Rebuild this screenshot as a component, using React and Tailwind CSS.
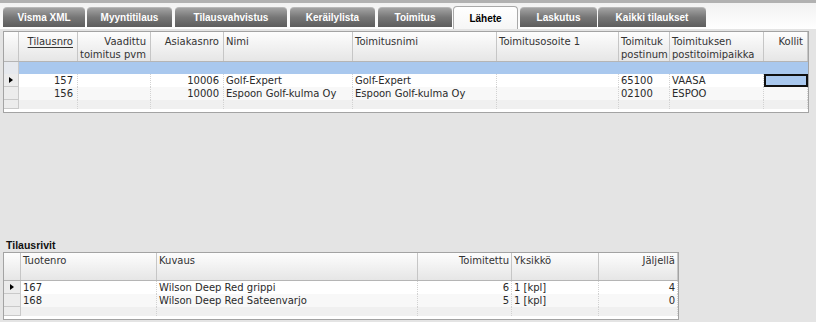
import React from 'react';

const tabs = [
  { label: 'Visma XML', cls: 'ml-[3px] w-[82px]' },
  { label: 'Myyntitilaus', cls: 'ml-[2px] w-[85px]' },
  { label: 'Tilausvahvistus', cls: 'ml-[3px] w-[112px]' },
  { label: 'Keräilylista', cls: 'ml-[3px] w-[85px]' },
  { label: 'Toimitus', cls: 'ml-[3px] w-[74px]' },
  { label: 'Lähete', cls: 'ml-[1px] w-[65px]', active: true },
  { label: 'Laskutus', cls: 'ml-[2px] w-[77px]' },
  { label: 'Kaikki tilaukset', cls: 'ml-[1px] w-[108px]' },
];

// header lines are what fits in the column (the grid clips the rest)
const orderCols = [
  { lines: ['Tilausnro'], w: 'w-[59px]', right: true, underline: true },
  { lines: ['Vaadittu', 'toimitus pvm'], w: 'w-[73px]', right: true },
  { lines: ['Asiakasnro'], w: 'w-[73px]', right: true },
  { lines: ['Nimi'], w: 'w-[129px]' },
  { lines: ['Toimitusnimi'], w: 'w-[144px]' },
  { lines: ['Toimitusosoite 1'], w: 'w-[122px]' },
  { lines: ['Toimituk', 'postinum'], w: 'w-[51px]', pad: 'pl-[2px] pr-0' },
  { lines: ['Toimituksen', 'postitoimipaikka'], w: 'w-[94px]' },
  { lines: ['Kollit'], w: 'w-[44px]', right: true },
];

const orders = [
  ['157', '', '10006', 'Golf-Expert', 'Golf-Expert', '', '65100', 'VAASA', ''],
  ['156', '', '10000', 'Espoon Golf-kulma Oy', 'Espoon Golf-kulma Oy', '', '02100', 'ESPOO', ''],
];

const lineCols = [
  { lines: ['Tuotenro'], w: 'w-[136px]' },
  { lines: ['Kuvaus'], w: 'w-[261px]' },
  { lines: ['Toimitettu'], w: 'w-[94px]', right: true },
  { lines: ['Yksikkö'], w: 'w-[87px]' },
  { lines: ['Jäljellä'], w: 'w-[79px]', right: true },
];

const lines = [
  ['167', 'Wilson Deep Red grippi', '6', '1 [kpl]', '4'],
  ['168', 'Wilson Deep Red Sateenvarjo', '5', '1 [kpl]', '0'],
];

const Tab = ({ tab }) =>
  tab.active ? (
    <div
      className={`${tab.cls} h-[23px] rounded-t-[4px] border-x border-t border-[#a9a9a9] bg-linear-to-b from-white to-[#f6f6f6] flex items-center justify-center text-black font-bold`}
    >
      {tab.label}
    </div>
  ) : (
    <div
      className={`${tab.cls} h-[20px] mb-[2px] rounded-t-[4px] border-t border-[#b8b8b8] bg-linear-to-b from-[#a3a3a3] via-[#767676] to-[#5d5d5d] flex items-center justify-center text-white font-bold`}
    >
      {tab.label}
    </div>
  );

const RowHeader = ({ h, bg = 'bg-[#ececec]', arrow, w }) => (
  <div className={`${w} ${h} ${bg} shrink-0 border-r border-b border-[#c9c9c9] flex items-center justify-center`}>
    {arrow && <div className="w-0 h-0 border-y-[3px] border-y-transparent border-l-[4px] border-l-black" />}
  </div>
);

const Grid = ({ cols, rows, width, rhW, headH, headPad, cellPad, selectedLast, blueRow }) => (
  <div className={`${width} bg-white border border-[#a3a3a3] flex flex-col overflow-hidden`}>
    {/* header */}
    <div className={`flex ${headH} border-b border-[#b5b5b5] bg-linear-to-b from-[#fdfdfd] to-[#e6e6e6]`}>
      <div className={`${rhW} shrink-0 border-r border-[#c6c6c6]`} />
      {cols.map((c, i) => (
        <div
          key={i}
          className={`${c.w} shrink-0 border-r border-[#c6c6c6] ${headPad} ${c.pad || cellPad} ${c.right ? 'text-right' : 'text-left'} text-[#333] leading-[13px] overflow-hidden`}
        >
          {c.lines.map((l, j) => (
            <div key={j} className={`whitespace-nowrap ${c.underline ? 'underline underline-offset-2' : ''}`}>
              {l}
            </div>
          ))}
        </div>
      ))}
    </div>

    {blueRow && (
      <div className="flex h-[12px]">
        <div className={`${rhW} shrink-0 bg-[#e6e9ee] border-r border-[#c9c9c9]`} />
        <div className="flex-1 bg-[#a9c8ee]" />
      </div>
    )}

    {rows.map((r, ri) => (
      <div key={ri} className={`flex h-[13px] ${ri % 2 ? 'bg-[#f8f8f8]' : 'bg-white'}`}>
        <RowHeader w={rhW} h="h-[13px]" arrow={ri === 0} />
        {cols.map((c, ci) => {
          const sel = selectedLast && ri === 0 && ci === cols.length - 1;
          return (
            <div
              key={ci}
              className={`${c.w} shrink-0 ${cellPad} leading-[13px] whitespace-nowrap overflow-hidden text-[#2a2a2a] ${c.right ? 'text-right' : 'text-left'} ${
                sel ? 'bg-[#a9c8ee] border-2 border-[#111]' : 'border-r border-dotted border-[#d2d2d2]'
              }`}
            >
              {r[ci]}
            </div>
          );
        })}
      </div>
    ))}

    <div className="flex h-[9px] bg-[#f0f0f0]">
      <RowHeader w={rhW} h="h-[9px]" />
      {cols.map((c, ci) => (
        <div key={ci} className={`${c.w} shrink-0 border-r border-dotted border-[#d2d2d2]`} />
      ))}
    </div>
    <div className="flex-1 bg-white" />
  </div>
);

export default function App() {
  return (
    <div className="w-[816px] h-[322px] overflow-hidden bg-[#e4e4e4] flex flex-col text-[10px] font-['DejaVu_Sans',sans-serif]">
      <div className="h-[3px] bg-[#b1b1b1] shrink-0" />
      <div className="h-[26px] shrink-0 bg-linear-to-b from-[#f2f2f2] to-white flex items-end font-['Liberation_Sans',Arial,sans-serif]">
        {tabs.map((t) => (
          <Tab key={t.label} tab={t} />
        ))}
      </div>

      <div className="mt-[2px] ml-[3px] h-[82px] flex">
        <Grid
          cols={orderCols}
          rows={orders}
          width="w-[806px]"
          rhW="w-[15px]"
          headH="h-[30px]"
          headPad="pt-[3px]"
          cellPad="pl-[2px] pr-[4px]"
          selectedLast
          blueRow
        />
      </div>

      <div className="mt-[126px] ml-[6px] h-[12px] leading-[12px] font-bold text-[10.5px] text-[#111] font-['Liberation_Sans',Arial,sans-serif]">
        Tilausrivit
      </div>

      <div className="mt-[1px] ml-[3px] h-[68px] flex">
        <Grid
          cols={lineCols}
          rows={lines}
          width="w-[676px]"
          rhW="w-[17px]"
          headH="h-[28px]"
          headPad="pt-[1px]"
          cellPad="pl-[2px] pr-[2px]"
        />
      </div>
    </div>
  );
}
